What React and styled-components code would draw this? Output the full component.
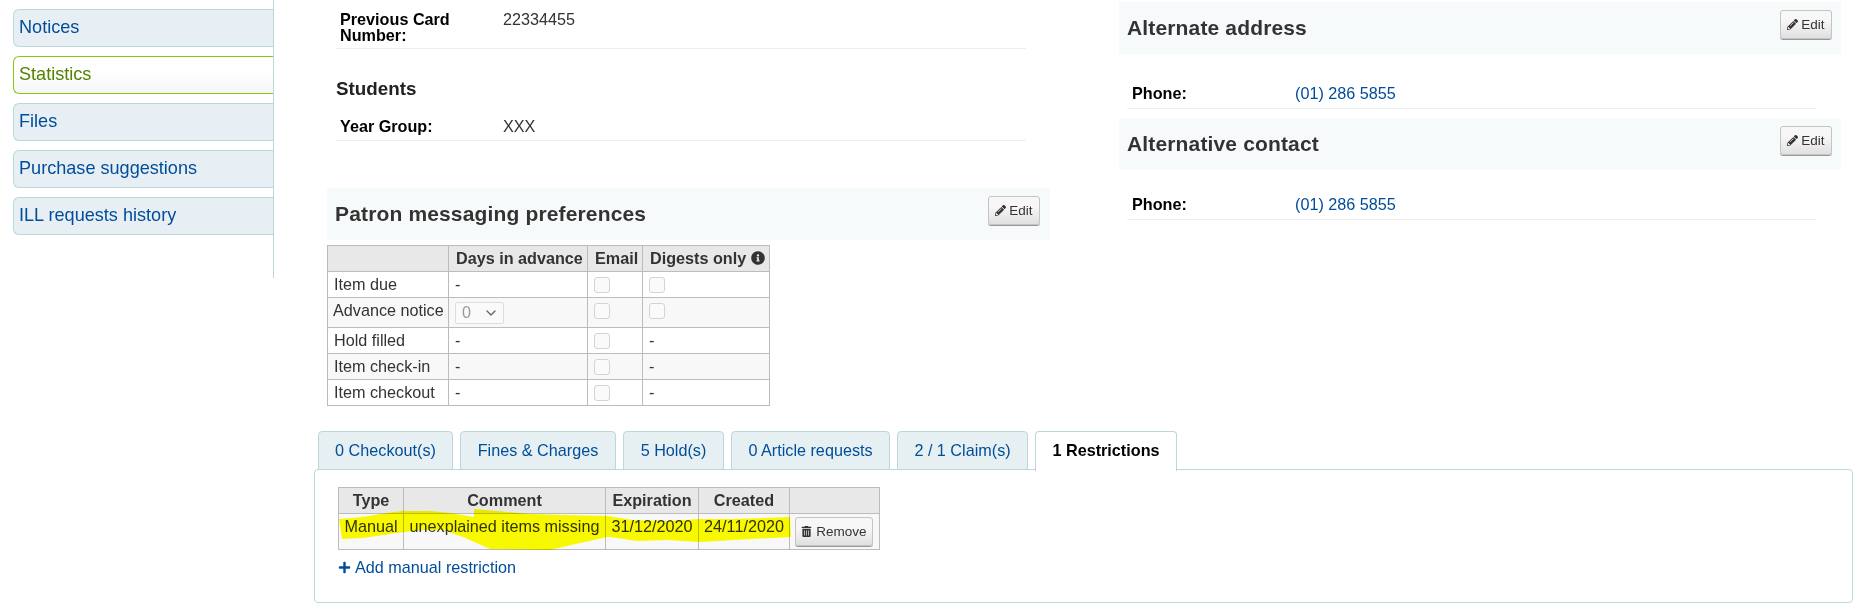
import React from 'react';
import styled, { createGlobalStyle } from 'styled-components';
import { FaPencilAlt, FaTrashAlt, FaInfoCircle, FaPlus } from 'react-icons/fa';
import { ChevronDown } from 'lucide-react';

const Global = createGlobalStyle`
  html, body { margin: 0; padding: 0; background: #fff; }
  body { font-family: "Liberation Sans", Arial, sans-serif; font-size: 16.2px; color: #000; overflow: hidden; }
  * { box-sizing: border-box; }
`;

const Page = styled.div`
  width: 1865px; height: 614px; overflow: hidden;
  display: grid; grid-template-columns: 274px 1fr;
`;
const Sidebar = styled.nav`
  height: 278px; border-right: 1px solid #b9d8d9;
  padding: 9px 0 0 13px;
  display: flex; flex-direction: column; gap: 9px;
`;
const SideItem = styled.a`
  height: 38px; display: flex; align-items: center; padding-left: 5px;
  font-size: 18.1px; padding-bottom: 1px;
  border: 1px solid ${p => p.$active ? '#85ca11' : '#b9d8d9'};
  border-right: none;
  border-radius: 6px 0 0 6px;
  background: ${p => p.$active ? 'linear-gradient(#ffffff 40%, #f6f6f6)' : '#e7eff5'};
  color: ${p => p.$active ? '#538200' : '#004d99'};
`;
const Main = styled.main`
  padding-left: 40px; display: flex; flex-direction: column;
`;
const Columns = styled.div`
  display: flex; height: 431px;
`;
const LeftCol = styled.div`
  width: 805px; padding-left: 13px;
`;
const RightCol = styled.div`
  width: 722px; padding-top: 2px;
`;
const Details = styled.dl`
  margin: 0 0 0 ${p => p.$indent}px; width: ${p => p.$w}px;
`;
const Row = styled.div`
  display: grid; grid-template-columns: ${p => p.$col}px 1fr;
  border-bottom: 1px solid #eee; padding: ${p => p.$pad};
  line-height: 16px;
`;
const Term = styled.dt`
  font-weight: 700; font-size: 16.2px; color: #000;
`;
const Value = styled.dd`
  margin: 0; font-size: 16.2px; color: #333;
`;
const PhoneLink = styled.a`
  color: #004d99;
`;
const SubHeading = styled.h3`
  margin: 0; padding: 30px 0 0 0; height: 67px; line-height: 20px; font-size: 18.8px; font-weight: 700; color: #222;
`;
const Bar = styled.div`
  height: 52px; width: ${p => p.$w}px; background: #f7fafb; position: relative;
  margin-top: ${p => p.$top || 0}px;
  display: flex; align-items: center; padding: 0 0 1px 8px;
`;
const BarTitle = styled.h2`
  margin: 0; font-size: 21px; font-weight: 700; color: #333; letter-spacing: .15px;
`;
const EditButton = styled.button`
  position: absolute; right: ${p => p.$right}px; top: 8px; width: 52px; height: 29px; padding: 0;
  font: 13.5px "Liberation Sans", Arial, sans-serif; color: #333;
  display: flex; align-items: center; justify-content: center; gap: 3px;
  border: 1px solid #c4c4c4; border-radius: 3px;
  background: linear-gradient(#f7f7f7 35%, #e0e0e0);
  box-shadow: 0 1px 0 #999;
`;
const MsgTable = styled.table`
  border-collapse: collapse; table-layout: fixed; margin: 5px 0 0 0; width: 442px;
  border: 1px solid #bcbcbc;
`;
const Th = styled.th`
  height: 26px; padding: 0 7px; text-align: left; font-size: 16.2px; font-weight: 700;
  background: #e8e8e8; color: #333; border: 1px solid #bcbcbc; white-space: nowrap;
`;
const Tr = styled.tr`
  background: ${p => p.$odd ? '#f8f8f8' : '#fff'};
`;
const Td = styled.td`
  height: ${p => p.$h || 26}px; padding: 0 5px ${p => p.$under || 0}px ${p => p.$left || 6}px; font-size: 16.2px; color: #333;
  border: 1px solid #bcbcbc; white-space: nowrap;
`;
const Check = styled.input.attrs({ type: 'checkbox', disabled: true })`
  appearance: none; display: block; margin: 0; width: 16px; height: 16px;
  border: 1px solid #d4d4d4; border-radius: 3px; background: #fafafa;
`;
const FakeSelect = styled.div`
  width: 49px; height: 22px; border: 1px solid #ddd; border-radius: 2px;
  display: flex; align-items: center; justify-content: space-between; padding: 0 4px 0 6px;
  color: #999; background: #fafafa;
`;
const TabList = styled.div`
  display: flex; gap: 7px; padding-left: 4px; height: 39px; position: relative; z-index: 1;
`;
const Tab = styled.a`
  height: ${p => p.$active ? 40 : 39}px; width: ${p => p.$w}px; padding-bottom: ${p => p.$active ? 2 : 0}px;
  display: flex; align-items: center; justify-content: center; font-size: 16.2px;
  border: 1px solid #b9d8d9; border-radius: 4px 4px 0 0; white-space: nowrap;
  ${p => p.$active
    ? 'background:#fff;border-bottom:none;font-weight:700;color:#000;'
    : 'background:#e6f0f2;color:#004d99;'}
`;
const Panel = styled.div`
  width: 1539px; height: 134px; margin-top: -1px;
  border: 1px solid #b9d8d9; border-radius: 4px; padding: 17px 0 0 23px;
`;
const RestrictWrap = styled.div`
  position: relative; width: 541px;
`;
const RestrictTable = styled.table`
  border-collapse: collapse; table-layout: fixed; width: 541px;
  border: 1px solid #bcbcbc;
`;
const RTh = styled(Th)`
  text-align: center; padding: 0;
`;
const RTd = styled.td`
  height: 36px; padding: 0 0 10px; text-align: center; font-size: 16.2px; color: #333; background: #f8f8f8;
  border: 1px solid #bcbcbc; white-space: nowrap;
`;
const ActionTd = styled(RTd)`
  padding: 0 5px;
`;
const RemoveButton = styled.button`
  width: 78px; height: 29px; padding: 0;
  font: 13.5px "Liberation Sans", Arial, sans-serif; color: #333;
  display: flex; align-items: center; justify-content: center; gap: 4px;
  border: 1px solid #c4c4c4; border-radius: 3px;
  background: linear-gradient(#f7f7f7 35%, #e0e0e0);
  box-shadow: 0 1px 0 #999;
`;
const Highlight = styled.svg`
  position: absolute; left: 0; top: 0; width: 541px; height: 70px;
  mix-blend-mode: multiply; pointer-events: none;
`;
const AddLink = styled.a`
  display: inline-flex; align-items: center; gap: 4px; margin-top: 8px; color: #004d99; font-size: 16.2px;
`;
const InfoIcon = styled(FaInfoCircle)`
  font-size: 14px; vertical-align: -1px; color: #333;
`;

const sideItems = ['Notices', 'Statistics', 'Files', 'Purchase suggestions', 'ILL requests history'];
const tabs = [
  ['0 Checkout(s)', 135], ['Fines & Charges', 156], ['5 Hold(s)', 101],
  ['0 Article requests', 159], ['2 / 1 Claim(s)', 131], ['1 Restrictions', 142, true],
];
const hl = '1,32 25,30 49,26 65,24 92,24 112,26 136,30 136,22 159,24 192,27 225,28 269,29 295,33 329,34 362,32 395,32 452,30 453,50 412,52 362,55 329,53 299,54 272,50 269,50 242,56 212,63 152,62 125,50 105,43 85,43 59,46 25,51 4,52';

const Edit = ({ right }) => (
  <EditButton $right={right}><FaPencilAlt size={11} />Edit</EditButton>
);

export default function App() {
  return (
    <Page>
      <Global />
      <Sidebar>
        {sideItems.map(s => <SideItem key={s} $active={s === 'Statistics'}>{s}</SideItem>)}
      </Sidebar>
      <Main>
        <Columns>
          <LeftCol>
            <Details $indent={9} $w={690}>
              <Row $col={163} $pad="11px 4px 5px">
                <Term>Previous Card<br />Number:</Term>
                <Value>22334455</Value>
              </Row>
              <SubHeading>Students</SubHeading>
              <Row $col={163} $pad="2px 4px 6px"><Term>Year Group:</Term><Value>XXX</Value></Row>
            </Details>
            <Bar $w={723} $top={47}>
              <BarTitle>Patron messaging preferences</BarTitle>
              <Edit right={10} />
            </Bar>
            <MsgTable>
              <colgroup><col width="121" /><col width="139" /><col width="55" /><col width="127" /></colgroup>
              <thead>
                <tr><Th /><Th>Days in advance</Th><Th>Email</Th><Th>Digests only <InfoIcon /></Th></tr>
              </thead>
              <tbody>
                <Tr><Td>Item due</Td><Td>-</Td><Td><Check /></Td><Td><Check /></Td></Tr>
                <Tr $odd><Td $h={30} $under={4} $left={5}>Advance notice</Td><Td $h={30}><FakeSelect>0<ChevronDown size={16} color="#666" /></FakeSelect></Td><Td $h={30} $under={3}><Check /></Td><Td $h={30} $under={3}><Check /></Td></Tr>
                <Tr><Td>Hold filled</Td><Td>-</Td><Td><Check /></Td><Td>-</Td></Tr>
                <Tr $odd><Td>Item check-in</Td><Td>-</Td><Td><Check /></Td><Td>-</Td></Tr>
                <Tr><Td>Item checkout</Td><Td>-</Td><Td><Check /></Td><Td>-</Td></Tr>
              </tbody>
            </MsgTable>
          </LeftCol>
          <RightCol>
            <Bar>
              <BarTitle>Alternate address</BarTitle>
              <Edit right={9} />
            </Bar>
            <Details $indent={8} $w={689}>
              <Row $col={163} $pad="31px 5px 7px"><Term>Phone:</Term><Value><PhoneLink>(01) 286 5855</PhoneLink></Value></Row>
            </Details>
            <Bar $top={9}>
              <BarTitle>Alternative contact</BarTitle>
              <Edit right={9} />
            </Bar>
            <Details $indent={8} $w={689}>
              <Row $col={163} $pad="26px 5px 7px"><Term>Phone:</Term><Value><PhoneLink>(01) 286 5855</PhoneLink></Value></Row>
            </Details>
          </RightCol>
        </Columns>
        <section>
          <TabList>
            {tabs.map(([t, w, a]) => <Tab key={t} $w={w} $active={a}>{t}</Tab>)}
          </TabList>
          <Panel>
            <RestrictWrap>
              <RestrictTable>
                <colgroup><col width="65" /><col width="202" /><col width="93" /><col width="91" /><col width="90" /></colgroup>
                <thead>
                  <tr><RTh>Type</RTh><RTh>Comment</RTh><RTh>Expiration</RTh><RTh>Created</RTh><RTh /></tr>
                </thead>
                <tbody>
                  <tr>
                    <RTd>Manual</RTd><RTd>unexplained items missing</RTd><RTd>31/12/2020</RTd><RTd>24/11/2020</RTd>
                    <ActionTd><RemoveButton><FaTrashAlt size={11} />Remove</RemoveButton></ActionTd>
                  </tr>
                </tbody>
              </RestrictTable>
              <Highlight viewBox="0 0 541 70"><polygon points={hl} fill="#ffff00" /></Highlight>
            </RestrictWrap>
            <AddLink><FaPlus size={13} />Add manual restriction</AddLink>
          </Panel>
        </section>
      </Main>
    </Page>
  );
}
